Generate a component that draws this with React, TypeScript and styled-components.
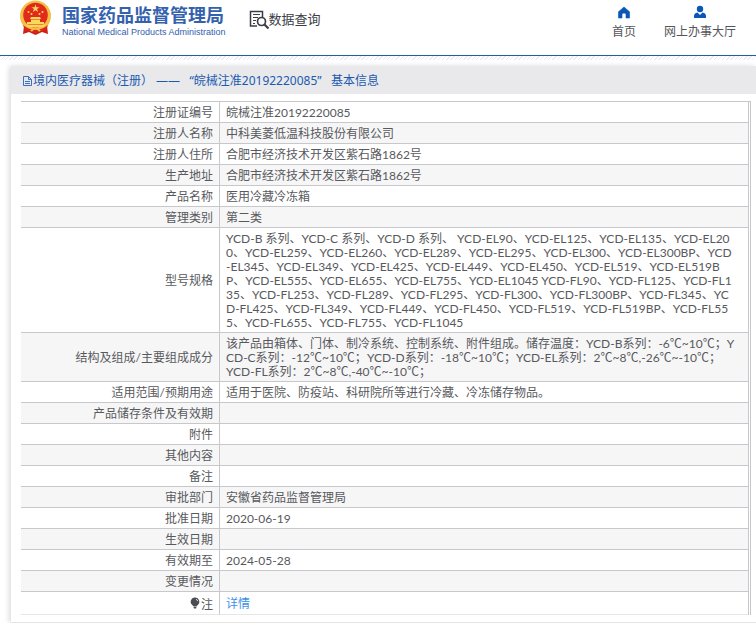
import React from "react";
import styled, { createGlobalStyle } from "styled-components";

const GlobalStyle = createGlobalStyle`
  * { box-sizing: border-box; }
  body {
    margin: 0;
    background: #fff;
    color: #58595d;
    font: 12px/14px Lato, "Noto Sans CJK SC", sans-serif;
  }
`;

const Header = styled.header`
  display: flex;
  align-items: flex-start;
  height: 56px;
  padding: 0 20px 0 19px;
  border-bottom: 1px solid #1f5f9f;
`;

const Brand = styled.a`
  display: flex;
  gap: 10px;
  color: #3361ae;
  text-decoration: none;
`;

const BrandText = styled.span`
  display: flex;
  flex-direction: column;
  padding-top: 3px;
`;

const BrandName = styled.span`
  font: bold 18px/22px "Noto Sans CJK SC", sans-serif;
  white-space: nowrap;
`;

const BrandSub = styled.span`
  font: 9px/14px "Liberation Sans", sans-serif;
  white-space: nowrap;
`;

const Query = styled.a`
  display: flex;
  align-items: center;
  margin: 9px 0 0 23px;
  color: #3b3e46;
  font: 13px/20px "Noto Sans CJK SC", sans-serif;
  text-decoration: none;
  white-space: nowrap;
`;

const Nav = styled.nav`
  display: flex;
  gap: 28px;
  margin-left: auto;
  padding-top: 5px;
`;

const NavLink = styled.a`
  display: flex;
  flex-direction: column;
  align-items: center;
  gap: 4px;
  color: #55565a;
  line-height: 18px;
  text-decoration: none;
  white-space: nowrap;
`;

const Main = styled.main`
  padding: 4px 0 0 11px;
  background: repeating-linear-gradient(135deg, #ececf0 0 1px, #fff 1px 3px) top / 100% 4px no-repeat;
`;

const Panel = styled.section`
  margin-top: 6px;
  padding-bottom: 7px;
  border-bottom: 1px solid #e4e4e4;
  box-shadow: -2px 0 5px #ddd;
`;

const Title = styled.h1`
  display: flex;
  align-items: center;
  height: 28px;
  margin: 0;
  padding: 2px 0 0 11px;
  background: #e9e9eb;
  color: #1b5ab0;
  font-family: "Noto Sans", "Noto Sans CJK SC", sans-serif;
  font-size: 12px;
  font-weight: 400;
  white-space: pre;
`;

const Frame = styled.div`
  margin: 7px 5px 0 10px;
  padding-right: 1px;
  border-top: 1px solid #c8c8cc;
  border-right: 1px solid #c8c8cc;
`;

const Table = styled.table`
  width: 100%;
  border-spacing: 0;
  border-right: 1px solid #c8c8cc;
  table-layout: fixed;
`;

const Row = styled.tr`
  &:nth-child(even) { background: #f6f6f7; }
  &:last-child > * {
    height: 23px;
    border-bottom-color: #e6e6e6;
  }
`;

const Label = styled.th`
  width: 199px;
  height: 21px;
  padding: 4px 6px 2px;
  border-right: 1px solid #c8c8cc;
  border-bottom: 1px solid #c8c8cc;
  font-weight: 400;
  text-align: right;
`;

const Value = styled.td`
  padding: 4px 6px 2px;
  border-bottom: 1px solid #c8c8cc;
`;

const Line = styled.span`
  display: block;
  white-space: nowrap;
`;

const DetailLink = styled.a`
  color: #3c8fe8;
  text-decoration: none;
`;

const Emblem = () => (
  <svg width="33" height="36" viewBox="0 0 33 36" aria-hidden="true">
    <path d="M5 26 L4 34 L10 32 L16.5 35 L23 32 L29 34 L28 26Z" fill="#cf1f16" />
    <circle cx="16.500" cy="16" r="15.500" fill="#f4bf43" />
    <circle cx="16.500" cy="15" r="12.300" fill="#df2a1c" />
    <path d="M16.500 4.500l1 2.800h3l-2.400 1.800.9 2.900-2.500-1.700-2.500 1.700.9-2.900-2.400-1.800h3z" fill="#fbd75a" />
    <g fill="#fbd75a">
      <circle cx="9.500" cy="12" r="1" />
      <circle cx="12.500" cy="14" r="1" />
      <circle cx="20.500" cy="14" r="1" />
      <circle cx="23.500" cy="12" r="1" />
      <path d="M12 17h9l1 2H11zM12 19.500h9V22h4v2H8v-2h4zM6.500 24.500h20l-2 2.500h-16z" />
    </g>
    <path d="M4 25q6 5 12.500 4.500Q23 30 29 25l-2 5q-5 1-7 1l-3.500 2.500L13 31q-4 0-7-1z" fill="#d9281b" />
    <path d="M12 31q4.500-5 9 0" stroke="#f4bf43" strokeWidth="2" fill="none" />
  </svg>
);

const QueryIcon = () => (
  <svg width="20" height="20" viewBox="0 0 20 20" fill="none" stroke="#3b3e46" aria-hidden="true">
    <path d="M8 17H1.500V2.500h12V8" strokeWidth="1.500" />
    <path d="M4 5.500h7M4 8.500h5M4 11.500h3M4 14.500h2" />
    <circle cx="12.500" cy="12.500" r="4" strokeWidth="1.700" />
    <path d="M15.500 15.500l4 4" strokeWidth="2.200" />
  </svg>
);

const HomeIcon = () => (
  <svg width="14" height="14" viewBox="0 0 14 14" aria-hidden="true">
    <path d="M7 2 1.500 6.800V13h3.500V9.500q0-1.500 2-1.500t2 1.500V13h3.500V6.800z" fill="#0b57b7" stroke="#0b57b7" strokeLinejoin="round" strokeWidth=".6" />
  </svg>
);

const UserIcon = () => (
  <svg width="14" height="14" viewBox="0 0 14 14" fill="#0b57b7" aria-hidden="true">
    <circle cx="7" cy="4" r="3.200" />
    <path d="M1 13v-2q0-3 3.500-3.500L7 10l2.500-2.500Q13 8 13 11v2z" />
  </svg>
);

const DocIcon = () => (
  <svg width="11" height="12" viewBox="0 0 11 12" fill="none" stroke="#3b6fc0" aria-hidden="true">
    <path d="M1.500 1.500h5l3 3v6h-8zM6.500 1.500v3h3M3 6.500h5M3 8.500h5" />
  </svg>
);

const BulbIcon = () => (
  <svg width="11" height="12" viewBox="0 0 11 12" aria-hidden="true">
    <path d="M5 .5a4.300 4.300 0 0 0-2.500 7.800L3.500 9.500h3l1-1.200A4.300 4.300 0 0 0 5 .5zM3.500 10h3l-.5 1.500H4z" fill="#4b4d52" />
    <path d="M6 2.200q1.500.6 1.700 2" stroke="#fff" strokeWidth=".8" fill="none" />
  </svg>
);

const records: { label: string; lines: string[] }[] = [
  { label: "注册证编号", lines: ["皖械注准20192220085"] },
  { label: "注册人名称", lines: ["中科美菱低温科技股份有限公司"] },
  { label: "注册人住所", lines: ["合肥市经济技术开发区紫石路1862号"] },
  { label: "生产地址", lines: ["合肥市经济技术开发区紫石路1862号"] },
  { label: "产品名称", lines: ["医用冷藏冷冻箱"] },
  { label: "管理类别", lines: ["第二类"] },
  {
    label: "型号规格",
    lines: [
      "YCD-B 系列、YCD-C 系列、YCD-D 系列、 YCD-EL90、YCD-EL125、YCD-EL135、YCD-EL20",
      "0、YCD-EL259、YCD-EL260、YCD-EL289、YCD-EL295、YCD-EL300、YCD-EL300BP、YCD",
      "-EL345、YCD-EL349、YCD-EL425、YCD-EL449、YCD-EL450、YCD-EL519、YCD-EL519B",
      "P、YCD-EL555、YCD-EL655、YCD-EL755、YCD-EL1045 YCD-FL90、YCD-FL125、YCD-FL1",
      "35、YCD-FL253、YCD-FL289、YCD-FL295、YCD-FL300、YCD-FL300BP、YCD-FL345、YC",
      "D-FL425、YCD-FL349、YCD-FL449、YCD-FL450、YCD-FL519、YCD-FL519BP、YCD-FL55",
      "5、YCD-FL655、YCD-FL755、YCD-FL1045",
    ],
  },
  {
    label: "结构及组成/主要组成成分",
    lines: [
      "该产品由箱体、门体、制冷系统、控制系统、附件组成。储存温度：YCD-B系列：-6℃~10℃；Y",
      "CD-C系列：-12℃~10℃；YCD-D系列：-18℃~10℃；YCD-EL系列：2℃~8℃,-26℃~-10℃；",
      "YCD-FL系列：2℃~8℃,-40℃~-10℃；",
    ],
  },
  { label: "适用范围/预期用途", lines: ["适用于医院、防疫站、科研院所等进行冷藏、冷冻储存物品。"] },
  { label: "产品储存条件及有效期", lines: [] },
  { label: "附件", lines: [] },
  { label: "其他内容", lines: [] },
  { label: "备注", lines: [] },
  { label: "审批部门", lines: ["安徽省药品监督管理局"] },
  { label: "批准日期", lines: ["2020-06-19"] },
  { label: "生效日期", lines: [] },
  { label: "有效期至", lines: ["2024-05-28"] },
  { label: "变更情况", lines: [] },
];

export default function App() {
  return (
    <>
      <GlobalStyle />
      <Header>
        <Brand href="#">
          <Emblem />
          <BrandText>
            <BrandName>国家药品监督管理局</BrandName>
            <BrandSub>National Medical Products Administration</BrandSub>
          </BrandText>
        </Brand>
        <Query href="#query"><QueryIcon />数据查询</Query>
        <Nav>
          <NavLink href="#home"><HomeIcon />首页</NavLink>
          <NavLink href="#hall"><UserIcon />网上办事大厅</NavLink>
        </Nav>
      </Header>
      <Main lang="zh-CN">
        <Panel>
          <Title><DocIcon />境内医疗器械（注册） ——   “皖械注准20192220085”   基本信息</Title>
          <Frame>
            <Table>
              <tbody>
                {records.map(({ label, lines }) => (
                  <Row key={label}>
                    <Label scope="row">{label}</Label>
                    <Value>{lines.map((line) => <Line key={line}>{line}</Line>)}</Value>
                  </Row>
                ))}
                <Row>
                  <Label scope="row"><BulbIcon />注</Label>
                  <Value><DetailLink href="#detail">详情</DetailLink></Value>
                </Row>
              </tbody>
            </Table>
          </Frame>
        </Panel>
      </Main>
    </>
  );
}
